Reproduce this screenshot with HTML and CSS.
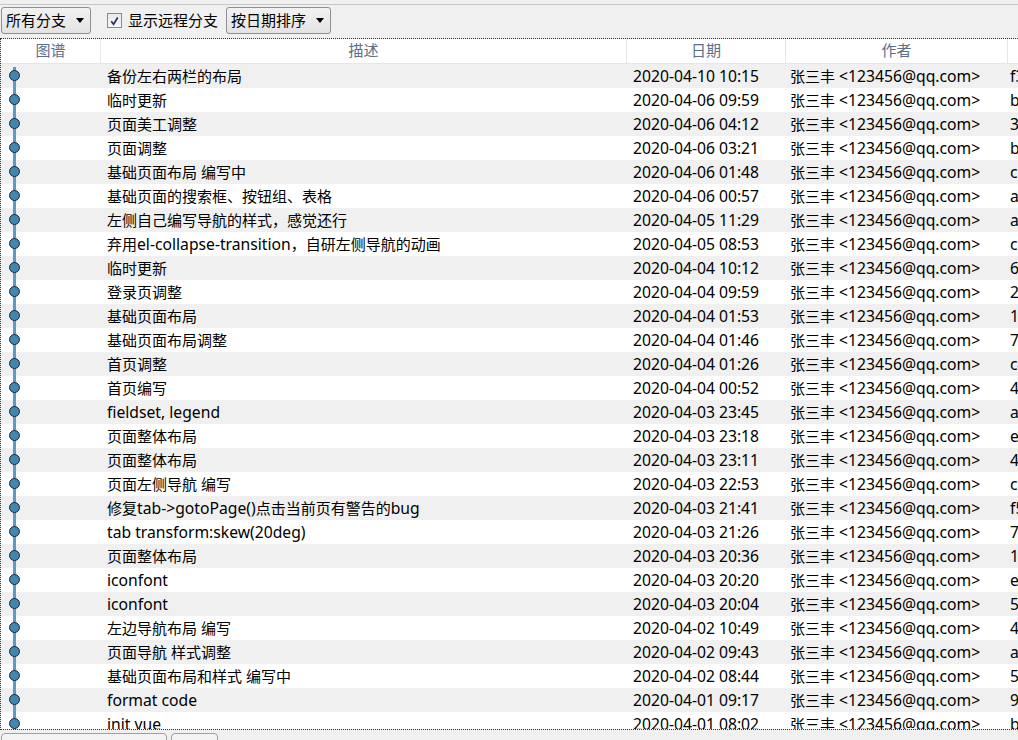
FILE: index.html
```html
<!DOCTYPE html>
<html lang="zh-CN">
<head>
<meta charset="utf-8">
<title>提交历史</title>
<link rel="stylesheet" href="styles.css">
</head>
<body>
<div class="toolbar">
  <div class="combo combo-branch"><span>所有分支</span><span class="arrow"></span></div>
  <label class="check"><span class="box"><svg viewBox="0 0 14 14" width="14" height="14"><path d="M3.5 7.2 L6 10.5 L10.5 3.2" fill="none" stroke="#24306e" stroke-width="1.8"/></svg></span><span>显示远程分支</span></label>
  <div class="combo combo-sort"><span>按日期排序</span><span class="arrow"></span></div>
</div>
<div class="view">
  <div class="row head">
    <div class="c g">图谱</div>
    <div class="c d">描述</div>
    <div class="c t">日期</div>
    <div class="c a">作者</div>
    <div class="c h"></div>
  </div>
  <div class="rows">
    <div class="row first"><div class="c g"><i></i></div><div class="c d">备份左右两栏的布局</div><div class="c t">2020-04-10 10:15</div><div class="c a"><span class="zh">张三丰</span> &lt;123456@qq.com&gt;</div><div class="c h">f3a9c21</div></div>
    <div class="row"><div class="c g"><i></i></div><div class="c d">临时更新</div><div class="c t">2020-04-06 09:59</div><div class="c a"><span class="zh">张三丰</span> &lt;123456@qq.com&gt;</div><div class="c h">b81e0d4</div></div>
    <div class="row"><div class="c g"><i></i></div><div class="c d">页面美工调整</div><div class="c t">2020-04-06 04:12</div><div class="c a"><span class="zh">张三丰</span> &lt;123456@qq.com&gt;</div><div class="c h">3c57a90</div></div>
    <div class="row"><div class="c g"><i></i></div><div class="c d">页面调整</div><div class="c t">2020-04-06 03:21</div><div class="c a"><span class="zh">张三丰</span> &lt;123456@qq.com&gt;</div><div class="c h">b0d4e12</div></div>
    <div class="row"><div class="c g"><i></i></div><div class="c d">基础页面布局 编写中</div><div class="c t">2020-04-06 01:48</div><div class="c a"><span class="zh">张三丰</span> &lt;123456@qq.com&gt;</div><div class="c h">c92f7ab</div></div>
    <div class="row"><div class="c g"><i></i></div><div class="c d">基础页面的搜索框、按钮组、表格</div><div class="c t">2020-04-06 00:57</div><div class="c a"><span class="zh">张三丰</span> &lt;123456@qq.com&gt;</div><div class="c h">a47d3e8</div></div>
    <div class="row"><div class="c g"><i></i></div><div class="c d">左侧自己编写导航的样式，感觉还行</div><div class="c t">2020-04-05 11:29</div><div class="c a"><span class="zh">张三丰</span> &lt;123456@qq.com&gt;</div><div class="c h">a10be57</div></div>
    <div class="row"><div class="c g"><i></i></div><div class="c d">弃用<span class="en">el-collapse-transition</span>，自研左侧导航的动画</div><div class="c t">2020-04-05 08:53</div><div class="c a"><span class="zh">张三丰</span> &lt;123456@qq.com&gt;</div><div class="c h">c6e2f09</div></div>
    <div class="row"><div class="c g"><i></i></div><div class="c d">临时更新</div><div class="c t">2020-04-04 10:12</div><div class="c a"><span class="zh">张三丰</span> &lt;123456@qq.com&gt;</div><div class="c h">6d8a4c1</div></div>
    <div class="row"><div class="c g"><i></i></div><div class="c d">登录页调整</div><div class="c t">2020-04-04 09:59</div><div class="c a"><span class="zh">张三丰</span> &lt;123456@qq.com&gt;</div><div class="c h">2e9b7f3</div></div>
    <div class="row"><div class="c g"><i></i></div><div class="c d">基础页面布局</div><div class="c t">2020-04-04 01:53</div><div class="c a"><span class="zh">张三丰</span> &lt;123456@qq.com&gt;</div><div class="c h">1a5c0e6</div></div>
    <div class="row"><div class="c g"><i></i></div><div class="c d">基础页面布局调整</div><div class="c t">2020-04-04 01:46</div><div class="c a"><span class="zh">张三丰</span> &lt;123456@qq.com&gt;</div><div class="c h">7f3d29b</div></div>
    <div class="row"><div class="c g"><i></i></div><div class="c d">首页调整</div><div class="c t">2020-04-04 01:26</div><div class="c a"><span class="zh">张三丰</span> &lt;123456@qq.com&gt;</div><div class="c h">c4b8e70</div></div>
    <div class="row"><div class="c g"><i></i></div><div class="c d">首页编写</div><div class="c t">2020-04-04 00:52</div><div class="c a"><span class="zh">张三丰</span> &lt;123456@qq.com&gt;</div><div class="c h">4e0a6d2</div></div>
    <div class="row"><div class="c g"><i></i></div><div class="c d"><span class="en">fieldset, legend</span></div><div class="c t">2020-04-03 23:45</div><div class="c a"><span class="zh">张三丰</span> &lt;123456@qq.com&gt;</div><div class="c h">a93f1c5</div></div>
    <div class="row"><div class="c g"><i></i></div><div class="c d">页面整体布局</div><div class="c t">2020-04-03 23:18</div><div class="c a"><span class="zh">张三丰</span> &lt;123456@qq.com&gt;</div><div class="c h">e2c7b48</div></div>
    <div class="row"><div class="c g"><i></i></div><div class="c d">页面整体布局</div><div class="c t">2020-04-03 23:11</div><div class="c a"><span class="zh">张三丰</span> &lt;123456@qq.com&gt;</div><div class="c h">4b6e91d</div></div>
    <div class="row"><div class="c g"><i></i></div><div class="c d">页面左侧导航 编写</div><div class="c t">2020-04-03 22:53</div><div class="c a"><span class="zh">张三丰</span> &lt;123456@qq.com&gt;</div><div class="c h">c07d5a3</div></div>
    <div class="row"><div class="c g"><i></i></div><div class="c d">修复<span class="en">tab-&gt;gotoPage()</span>点击当前页有警告的<span class="en">bug</span></div><div class="c t">2020-04-03 21:41</div><div class="c a"><span class="zh">张三丰</span> &lt;123456@qq.com&gt;</div><div class="c h">f58e26c</div></div>
    <div class="row"><div class="c g"><i></i></div><div class="c d"><span class="en">tab transform:skew(20deg)</span></div><div class="c t">2020-04-03 21:26</div><div class="c a"><span class="zh">张三丰</span> &lt;123456@qq.com&gt;</div><div class="c h">7a1c93e</div></div>
    <div class="row"><div class="c g"><i></i></div><div class="c d">页面整体布局</div><div class="c t">2020-04-03 20:36</div><div class="c a"><span class="zh">张三丰</span> &lt;123456@qq.com&gt;</div><div class="c h">1d4f8b7</div></div>
    <div class="row"><div class="c g"><i></i></div><div class="c d"><span class="en">iconfont</span></div><div class="c t">2020-04-03 20:20</div><div class="c a"><span class="zh">张三丰</span> &lt;123456@qq.com&gt;</div><div class="c h">e6b203a</div></div>
    <div class="row"><div class="c g"><i></i></div><div class="c d"><span class="en">iconfont</span></div><div class="c t">2020-04-03 20:04</div><div class="c a"><span class="zh">张三丰</span> &lt;123456@qq.com&gt;</div><div class="c h">5c9e7d1</div></div>
    <div class="row"><div class="c g"><i></i></div><div class="c d">左边导航布局 编写</div><div class="c t">2020-04-02 10:49</div><div class="c a"><span class="zh">张三丰</span> &lt;123456@qq.com&gt;</div><div class="c h">4f27a0c</div></div>
    <div class="row"><div class="c g"><i></i></div><div class="c d">页面导航 样式调整</div><div class="c t">2020-04-02 09:43</div><div class="c a"><span class="zh">张三丰</span> &lt;123456@qq.com&gt;</div><div class="c h">a8d15e9</div></div>
    <div class="row"><div class="c g"><i></i></div><div class="c d">基础页面布局和样式 编写中</div><div class="c t">2020-04-02 08:44</div><div class="c a"><span class="zh">张三丰</span> &lt;123456@qq.com&gt;</div><div class="c h">5e3b0f2</div></div>
    <div class="row"><div class="c g"><i></i></div><div class="c d"><span class="en">format code</span></div><div class="c t">2020-04-01 09:17</div><div class="c a"><span class="zh">张三丰</span> &lt;123456@qq.com&gt;</div><div class="c h">9b7c4d6</div></div>
    <div class="row"><div class="c g"><i></i></div><div class="c d"><span class="en">init vue</span></div><div class="c t">2020-04-01 08:02</div><div class="c a"><span class="zh">张三丰</span> &lt;123456@qq.com&gt;</div><div class="c h">b2a6e80</div></div>
  </div>
</div>
<div class="bottom">
  <div class="tab tab-wide"></div>
  <div class="tab tab-small"></div>
</div>
</body>
</html>
```
FILE: styles.css
```css
html, body {
  margin: 0;
  padding: 0;
  background: #f0f0f0;
  overflow: hidden;
}
body {
  width: 1018px;
  height: 740px;
  padding-top: 4px;
  box-sizing: border-box;
  font-family: "Noto Sans", "Noto Sans CJK SC", sans-serif;
  font-size: 15px;
  color: #000;
}
.toolbar {
  border-top: 1px solid #c8c8c8;
  height: 34px;
  box-sizing: border-box;
  display: flex;
  align-items: flex-start;
  padding: 2px 0 0 1px;
}
.combo {
  height: 27px;
  box-sizing: border-box;
  border: 1px solid #8f8f8f;
  border-radius: 3px;
  background: linear-gradient(#f2f2f2, #e3e3e3);
  display: flex;
  align-items: center;
  justify-content: space-between;
  padding: 0 6px 0 4px;
  line-height: 1;
}
.combo-branch { width: 90px; }
.combo-sort { width: 105px; }
.arrow {
  width: 0;
  height: 0;
  border-left: 4px solid transparent;
  border-right: 4px solid transparent;
  border-top: 5px solid #000;
}
.check {
  display: flex;
  align-items: center;
  height: 27px;
  margin-left: 16px;
  width: 119px;
  line-height: 1;
}
.box {
  width: 13px;
  height: 13px;
  border: 1px solid #8a8a8a;
  background: linear-gradient(#e9e9e9, #f8f8f8);
  margin-right: 6px;
  display: flex;
  align-items: center;
  justify-content: center;
}
.box svg { display: block; }
.view {
  border-top: 1px dotted #333;
  border-left: 1px dotted #333;
  border-bottom: 1px dotted #333;
  height: 690px;
  overflow: hidden;
}
.row {
  display: grid;
  grid-template-columns: 100px 526px 159px 222px 1fr;
  height: 24px;
  line-height: 24px;
  white-space: nowrap;
}
.c {
  overflow: hidden;
}
.head {
  background: #fff;
  height: 25px;
  border-bottom: 1px solid #e6e6e6;
  color: #5b6e8c;
  box-sizing: border-box;
}
.head .c {
  text-align: center;
  border-right: 1px solid #e6e6e6;
  line-height: 23px;
}
.head .c.h { border-right: none; }
.rows .row:nth-child(odd) { background: #f0f0f0; }
.rows .row:nth-child(even) { background: #fff; }
.rows .d { padding-left: 6px; }
.rows .t { padding-left: 6px; font-size: 15.7px; }
.rows .a { padding-left: 4px; font-size: 15.7px; }
.rows .h { padding-left: 2px; font-size: 15.7px; }
.zh { font-size: 15px; }
.en { font-size: 15.7px; }
.g { position: relative; }
.rows .g::before {
  content: "";
  position: absolute;
  left: 12px;
  top: 0;
  bottom: 0;
  width: 3px;
  background: #5b9cc5;
}
.rows .first .g::before { top: 3px; }
.rows .g i {
  position: absolute;
  left: 8px;
  top: 6px;
  width: 9px;
  height: 9px;
  border-radius: 50%;
  background: #3f87b2;
  border: 1.5px solid #1d2a33;
}
.bottom {
  display: flex;
  gap: 4px;
  padding: 3px 0 0 1px;
}
.tab {
  height: 12px;
  border: 1px solid #a0a0a0;
  border-radius: 4px 4px 0 0;
  background: #f4f4f4;
  box-sizing: border-box;
}
.tab-wide { width: 166px; }
.tab-small { width: 47px; }
```
